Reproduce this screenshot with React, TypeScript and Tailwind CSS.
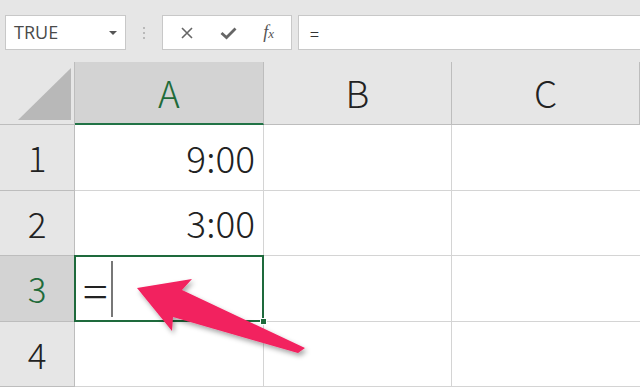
import React from "react";

const SANS = "font-['Noto_Sans_CJK_JP','Noto_Sans',sans-serif]";

const COLS = ["A", "B", "C"];
const ROWS: { n: number; a: string }[] = [
  { n: 1, a: "9:00" },
  { n: 2, a: "3:00" },
  { n: 3, a: "" },
  { n: 4, a: "" },
];

function FormulaBar() {
  return (
    <div className="flex h-[62px] items-start gap-[6px] bg-[#e6e6e6] pt-[15px] pl-[5px]">
      <div className="flex h-[35px] w-[121px] items-center justify-between border border-[#c8c8c8] bg-white pl-[8px] pr-[8px]">
        <span className="font-['Open_Sans',sans-serif] text-[18px] text-[#4a4a4a]">TRUE</span>
        <span className="h-0 w-0 border-x-[4px] border-t-[4px] border-x-transparent border-t-[#555]" />
      </div>
      <div className="flex h-[35px] w-[24px] flex-col items-center justify-center gap-[3px]">
        <span className="h-[2px] w-[2px] rounded-full bg-[#aaa]" />
        <span className="h-[2px] w-[2px] rounded-full bg-[#aaa]" />
        <span className="h-[2px] w-[2px] rounded-full bg-[#aaa]" />
      </div>
      <div className="flex h-[35px] w-[130px] items-center justify-around border border-[#c8c8c8] bg-white px-[4px]">
        <svg width="14" height="14" viewBox="0 0 14 14">
          <path d="M2 2 L12 12 M12 2 L2 12" stroke="#666" strokeWidth="1.6" />
        </svg>
        <svg width="17" height="14" viewBox="0 0 17 14">
          <path d="M1.5 7 L6.5 11.5 L15.5 2.5" stroke="#666" strokeWidth="2.8" fill="none" />
        </svg>
        <span className="font-['Liberation_Serif',serif] text-[18px] italic text-[#555]">
          f<span className="text-[13px]">x</span>
        </span>
      </div>
      <div className="flex h-[35px] flex-1 items-center border border-r-0 border-[#c8c8c8] bg-white pl-[11px]">
        <span className={`${SANS} text-[16px] text-[#333]`}>=</span>
      </div>
    </div>
  );
}

function Grid() {
  return (
    <div className={`grid grid-cols-[75px_189px_188px_188px] grid-rows-[63px_66px_65px_66px_65px] bg-white ${SANS}`}>
      <div className="relative border-r border-b border-[#bdbdbd] bg-[#e6e6e6]">
        <svg className="absolute left-0 top-0" width="75" height="63" viewBox="0 0 75 63">
          <polygon points="18,58 71,6 71,58" fill="#b8b8b8" />
        </svg>
      </div>
      {COLS.map((c) => (
        <div
          key={c}
          className={
            c === "A"
              ? "flex items-center justify-center border-r border-b-2 border-r-[#bdbdbd] border-b-[#217346] bg-[#d3d3d3] text-[37px] font-light text-[#1f6b3a]"
              : "flex items-center justify-center border-r border-b border-[#bdbdbd] bg-[#e6e6e6] text-[37px] font-light text-[#222]"
          }
        >
          {c}
        </div>
      ))}
      {ROWS.map((r) => (
        <React.Fragment key={r.n}>
          <div
            className={
              r.n === 3
                ? "flex items-center justify-center border-r border-b border-[#bdbdbd] bg-[#d3d3d3] text-[35px] font-light text-[#1f6b3a]"
                : "flex items-center justify-center border-r border-b border-[#bdbdbd] bg-[#e6e6e6] text-[35px] font-light text-[#222]"
            }
          >
            {r.n}
          </div>
          {r.n === 3 ? (
            <div className="relative flex items-center border-r border-b border-[#d4d4d4] pl-[8px]">
              <span className="text-[46px] font-light leading-none text-[#222]">=</span>
              <span className="ml-[3px] h-[56px] w-[2px] bg-[#777]" />
              <div className="absolute -left-px -top-px h-[67px] w-[190px] border-2 border-[#1e6a3c]" />
              <div className="absolute -bottom-[4px] -right-[4px] h-[7px] w-[7px] border border-white bg-[#1e6a3c]" />
            </div>
          ) : (
            <div className="flex items-center justify-end border-r border-b border-[#d4d4d4] pr-[8px] text-[37px] font-light text-[#222]">
              {r.a}
            </div>
          )}
          <div className="border-r border-b border-[#d4d4d4]" />
          <div className="border-b border-[#d4d4d4]" />
        </React.Fragment>
      ))}
    </div>
  );
}

function Arrow() {
  return (
    <svg className="pointer-events-none absolute left-0 top-0" width="640" height="387" viewBox="0 0 640 387">
      <defs>
        <filter id="sh" x="-20%" y="-20%" width="140%" height="140%">
          <feDropShadow dx="2" dy="3" stdDeviation="2.5" floodColor="#000" floodOpacity="0.35" />
        </filter>
      </defs>
      <polygon
        points="137,288 192,279 182,290 305,348 298,353 173,317 172,331"
        fill="#f2205f"
        filter="url(#sh)"
      />
    </svg>
  );
}

export default function App() {
  return (
    <div className="relative h-[387px] w-[640px] overflow-hidden bg-[#e6e6e6]">
      <FormulaBar />
      <Grid />
      <Arrow />
    </div>
  );
}
